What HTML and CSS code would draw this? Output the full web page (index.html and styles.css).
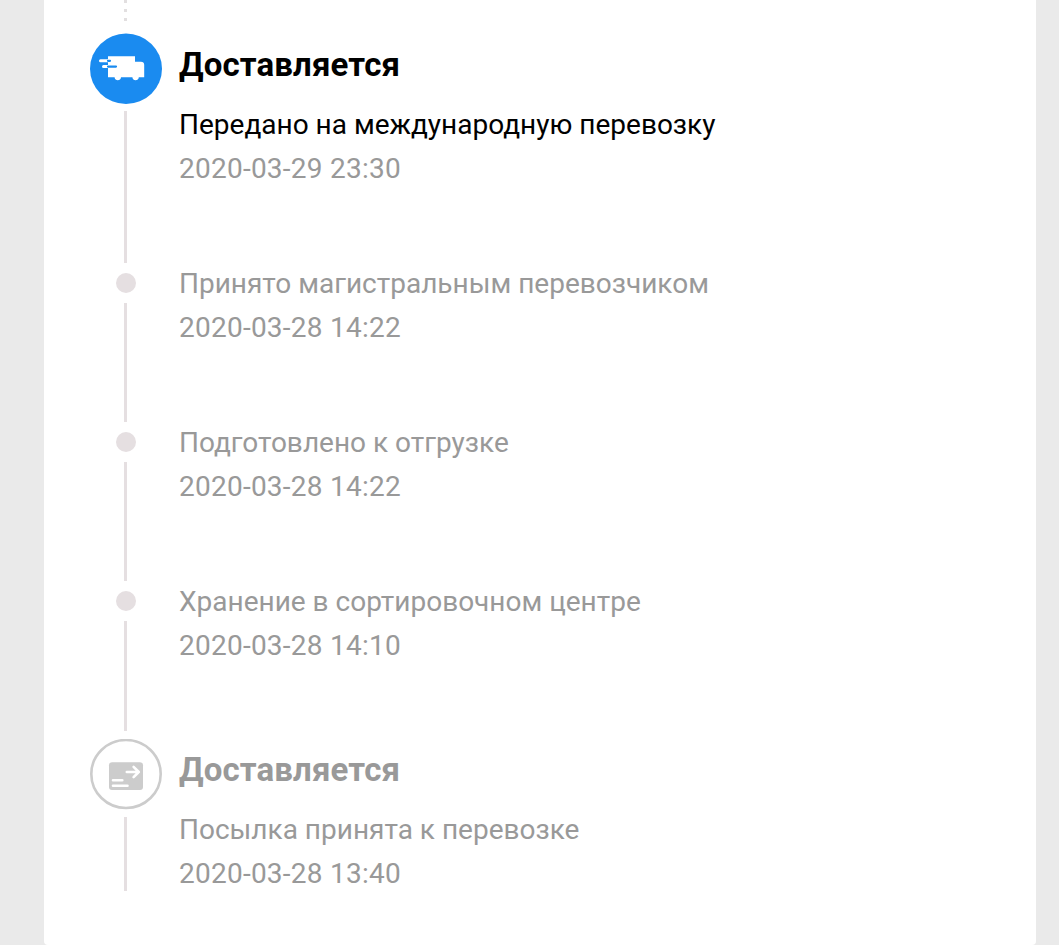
FILE: index.html
```html
<!DOCTYPE html>
<html lang="ru">
<head>
  <meta charset="utf-8">
  <title>Доставляется</title>
  <link rel="stylesheet" href="styles.css">
</head>
<body>
  <div class="card">
    <div class="dots"><i></i><i></i><i></i></div>

    <div class="step step-current">
      <div class="rail">
        <svg class="icon" viewBox="0 0 72 71">
          <ellipse cx="36" cy="35.8" rx="36" ry="35.2" fill="#1a8bf0"/>
          <path fill="#fff" d="M18 23.3h27v5.4h6c2 0 3.2 1 3.2 3v12.5h-5.4c0 4-6.4 4-6.4 0H31c0 4-6.4 4-6.4 0H18z"/>
          <path stroke="#fff" stroke-width="3" stroke-linecap="round" d="M10.5 27.8h8M13.5 33.6h6"/>
          <path stroke="#1a8bf0" stroke-width="2.2" stroke-linecap="round" d="M18 27.8h2M18 33.6h8"/>
        </svg>
        <div class="line"></div>
      </div>
      <div class="content">
        <div class="title">Доставляется</div>
        <div class="text">Передано на международную перевозку</div>
        <div class="date">2020-03-29 23:30</div>
      </div>
    </div>

    <div class="step step-small">
      <div class="rail">
        <div class="dot"></div>
        <div class="line"></div>
      </div>
      <div class="content">
        <div class="text">Принято магистральным перевозчиком</div>
        <div class="date">2020-03-28 14:22</div>
      </div>
    </div>

    <div class="step step-small">
      <div class="rail">
        <div class="dot"></div>
        <div class="line"></div>
      </div>
      <div class="content">
        <div class="text">Подготовлено к отгрузке</div>
        <div class="date">2020-03-28 14:22</div>
      </div>
    </div>

    <div class="step step-small step-before-icon">
      <div class="rail">
        <div class="dot"></div>
        <div class="line"></div>
      </div>
      <div class="content">
        <div class="text">Хранение в сортировочном центре</div>
        <div class="date">2020-03-28 14:10</div>
      </div>
    </div>

    <div class="step step-last">
      <div class="rail">
        <svg class="icon" viewBox="0 0 72 71">
          <ellipse cx="36" cy="35" rx="34.7" ry="34" fill="#fff" stroke="#ccc" stroke-width="2.6"/>
          <rect x="19" y="23.3" width="34" height="27.8" rx="3" fill="#ccc"/>
          <path fill="none" stroke="#fff" stroke-width="2.6" stroke-linecap="round" d="M23 41.2h9.3M23 46.8h14.5"/>
          <path fill="none" stroke="#fff" stroke-width="2.6" stroke-linecap="round" stroke-linejoin="round" d="M36.8 33h12M43.6 27.8l5.2 5.2-5.2 5.2"/>
        </svg>
        <div class="line"></div>
      </div>
      <div class="content">
        <div class="title">Доставляется</div>
        <div class="text">Посылка принята к перевозке</div>
        <div class="date">2020-03-28 13:40</div>
      </div>
    </div>
  </div>
</body>
</html>
```

FILE: styles.css
```css
* {
  box-sizing: border-box;
}

body {
  margin: 0;
  height: 945px;
  overflow: hidden;
  background-color: #eaeaea;
  font-family: Roboto, "Liberation Sans", sans-serif;
  color: #999;
}

.card {
  width: 992px;
  height: 945px;
  margin-left: 44px;
  padding-left: 46px;
  background-color: #fff;
  border-radius: 0 0 4px 4px;
}

.dots {
  width: 71px;
  height: 33px;
  display: flex;
  flex-direction: column;
  align-items: center;
  gap: 6px;
}

.dots i {
  width: 3px;
  height: 3px;
  background-color: #e2dfe0;
}

.step {
  display: flex;
  gap: 17px;
  height: 159px;
}

.rail {
  width: 72px;
  display: flex;
  flex-direction: column;
  align-items: center;
}

.icon {
  width: 72px;
  height: 71px;
  flex: none;
}

.dot {
  width: 20px;
  height: 20px;
  border-radius: 50%;
  background-color: #e5dfe1;
}

.line {
  flex: 1;
  width: 3px;
  margin: 10px 1px 10px 0;
  background-color: #e5dfe1;
}

.title {
  height: 60px;
  font-size: 33px;
  font-weight: bold;
  line-height: 44px;
  letter-spacing: 0.13px;
}

.text,
.date {
  font-size: 28px;
  line-height: 44px;
  white-space: nowrap;
}

.date {
  letter-spacing: 0.24px;
}

.content {
  padding-top: 10px;
}

.step-current {
  height: 240px;
}

.step-current .title,
.step-current .text {
  color: #000;
}

.step-current .line {
  margin-top: 7px;
}

.step-small .content {
  padding-top: 0;
  margin-top: -11px;
}

.step-before-icon {
  height: 148px;
}

.step-before-icon .line {
  margin-bottom: 8px;
}

.step-last {
  height: 152px;
}

.step-last .content {
  padding-top: 9px;
}

.step-last .line {
  margin-top: 7px;
  margin-bottom: 0;
}
```
